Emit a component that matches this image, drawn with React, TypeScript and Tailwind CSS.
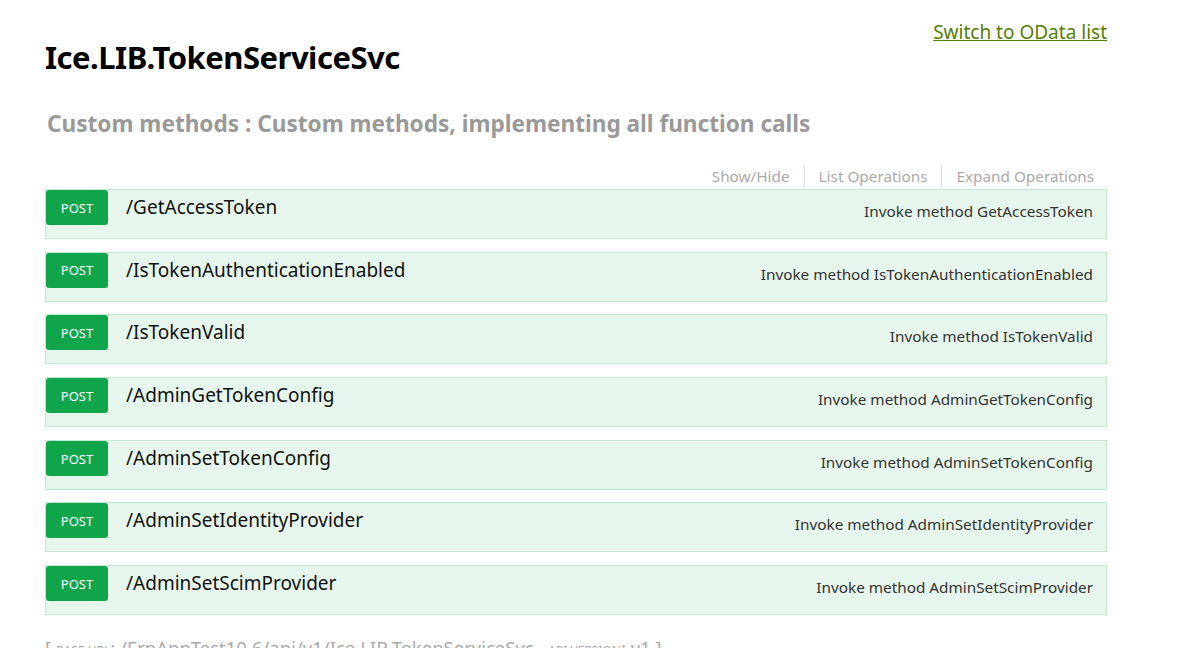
import React from 'react';

const ops = [
  'GetAccessToken',
  'IsTokenAuthenticationEnabled',
  'IsTokenValid',
  'AdminGetTokenConfig',
  'AdminSetTokenConfig',
  'AdminSetIdentityProvider',
  'AdminSetScimProvider',
];

function OperationRow({ name }: { name: string }) {
  return (
    <li className="h-[50px] bg-[#e7f6ec] border border-[#c3e8d1] flex items-start">
      <span className="w-[62px] h-[35px] bg-[#10a54a] rounded-[3px] text-white text-[13px] flex items-center justify-center shrink-0 pt-[2px]">
        POST
      </span>
      <span className="ml-[18px] mt-[5px] text-[19px] text-[#111] leading-[24px]">/{name}</span>
      <span className="ml-auto mr-[13px] mt-[11px] text-[15.3px] text-[#333] leading-[20px]">Invoke method {name}</span>
    </li>
  );
}

export default function App() {
  return (
    <div className="min-h-screen bg-white overflow-hidden" style={{ fontFamily: '"Noto Sans", "Open Sans", sans-serif' }}>
      <div className="ml-[45px] w-[1062px]">
        {/* Header */}
        <div className="flex justify-between items-start">
          <h1 className="mt-[37px] text-[31px] font-bold text-black leading-[40px] tracking-[-0.5px]">Ice.LIB.TokenServiceSvc</h1>
          <a href="#" className="mt-[19px] text-[19px] text-[#547f00] underline leading-[26px]">Switch to OData list</a>
        </div>

        <h2 className="mt-[32px] ml-[2px] text-[22.6px] font-bold text-[#999] leading-[30px]">
          Custom methods : Custom methods, implementing all function calls
        </h2>

        {/* Options */}
        <ul className="mt-[26px] mb-[2px] flex justify-end text-[15.3px] text-[#aaa] leading-[22px] pr-[13px]">
          <li className="pr-[14px] border-r border-[#ddd]">Show/Hide</li>
          <li className="px-[14px] border-r border-[#ddd]">List Operations</li>
          <li className="pl-[14px]">Expand Operations</li>
        </ul>

        {/* Operations */}
        <ul className="flex flex-col gap-[12.7px]">
          {ops.map((o) => (
            <OperationRow key={o} name={o} />
          ))}
        </ul>

        <div className="mt-[20px] text-[18.5px] text-[#aaa] leading-[26px]">
          [ <span className="text-[12px] uppercase">Base url</span>: /ErpAppTest10.6/api/v1/Ice.LIB.TokenServiceSvc , <span className="text-[12px] uppercase">Api version</span>: v1 ]
        </div>
      </div>
    </div>
  );
}
